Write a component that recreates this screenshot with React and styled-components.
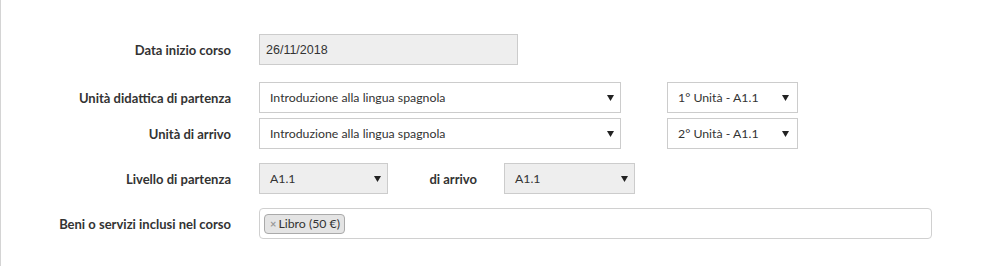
import React from "react";
import styled, { createGlobalStyle } from "styled-components";

const GlobalStyle = createGlobalStyle`
  html, body {
    margin: 0;
    padding: 0;
    background: #fff;
  }
  body {
    font-family: Lato, "Open Sans", sans-serif;
    color: #333;
  }
`;

const Page = styled.div`
  width: 992px;
  height: 266px;
  box-sizing: border-box;
  border-left: 1px solid #d4d4d4;
  padding-top: 34px;
`;

const Row = styled.div`
  display: flex;
  align-items: center;
  height: ${(p) => p.$h || 31}px;
  margin-bottom: ${(p) => p.$after || 0}px;
`;

const Label = styled.div`
  width: ${(p) => p.$width || 230}px;
  margin-right: ${(p) => p.$gap || 28}px;
  margin-left: ${(p) => p.$left || 0}px;
  text-align: right;
  font-size: 13px;
  font-weight: 700;
  color: #333;
  white-space: nowrap;
`;

const DateInput = styled.div`
  box-sizing: border-box;
  width: 259px;
  height: 31px;
  border: 1px solid #ccc;
  background: #eee;
  display: flex;
  align-items: center;
  padding-left: 6px;
  font-family: "Liberation Sans", Arial, sans-serif;
  font-size: 12.5px;
  color: #333;
`;

const SelectBox = styled.div`
  box-sizing: border-box;
  width: ${(p) => p.$width}px;
  height: 31px;
  margin-left: ${(p) => p.$left || 0}px;
  border: 1px solid #ccc;
  background: ${(p) => (p.$gray ? "#eee" : "#fff")};
  display: flex;
  align-items: center;
  justify-content: space-between;
  padding: 0 ${(p) => p.$pr || 6}px 0 10px;
  font-size: 12.3px;
  color: #333;
`;

const Arrow = () => (
  <svg width="7" height="6" viewBox="0 0 7 6">
    <polygon points="0,0 7,0 3.5,6" fill="#222" />
  </svg>
);

const Select = ({ children, ...rest }) => (
  <SelectBox {...rest}>
    <span>{children}</span>
    <Arrow />
  </SelectBox>
);

const TagInput = styled.div`
  box-sizing: border-box;
  width: 673px;
  height: 31px;
  border: 1px solid #d0d0d0;
  border-radius: 4px;
  display: flex;
  align-items: center;
  padding-left: 4px;
`;

const Tag = styled.span`
  box-sizing: border-box;
  height: 20px;
  display: inline-flex;
  align-items: center;
  padding: 0 4px 0 5px;
  background: #e4e4e4;
  border: 1px solid #aaa;
  border-radius: 4px;
  font-size: 12.3px;
  color: #333;
`;

const TagX = styled.span`
  color: #999;
  font-weight: 700;
  font-size: 11px;
  margin-right: 2px;
`;

export default function App() {
  return (
    <>
      <GlobalStyle />
      <Page>
        <Row $after={17}>
          <Label>Data inizio corso</Label>
          <DateInput>26/11/2018</DateInput>
        </Row>
        <Row $after={5}>
          <Label>Unità didattica di partenza</Label>
          <Select $width={362}>Introduzione alla lingua spagnola</Select>
          <Select $width={131} $left={46} $pr={8}>
            1° Unità - A1.1
          </Select>
        </Row>
        <Row $after={14}>
          <Label>Unità di arrivo</Label>
          <Select $width={362}>Introduzione alla lingua spagnola</Select>
          <Select $width={131} $left={46} $pr={8}>
            2° Unità - A1.1
          </Select>
        </Row>
        <Row $after={14}>
          <Label>Livello di partenza</Label>
          <Select $width={129} $gray>
            A1.1
          </Select>
          <Label $width={48} $left={41} $gap={27}>
            di arrivo
          </Label>
          <Select $width={131} $gray>
            A1.1
          </Select>
        </Row>
        <Row>
          <Label>Beni o servizi inclusi nel corso</Label>
          <TagInput>
            <Tag>
              <TagX>×</TagX>Libro (50 €)
            </Tag>
          </TagInput>
        </Row>
      </Page>
    </>
  );
}
